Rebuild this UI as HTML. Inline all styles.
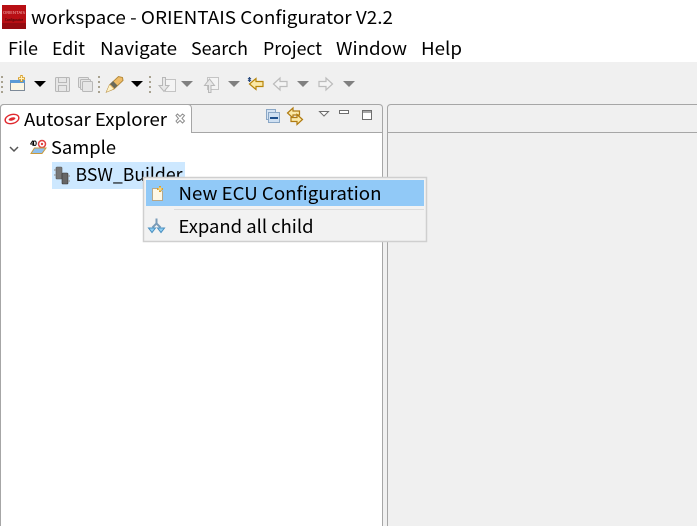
<!DOCTYPE html>
<html><head><meta charset="utf-8"><style>
html,body{margin:0;padding:0;background:#fff;width:697px;height:526px;overflow:hidden}
svg{display:block}
text{font-family:"Noto Sans CJK SC","Liberation Sans",sans-serif;fill:#000;font-size:18px}
</style></head><body>
<svg width="697" height="526" viewBox="0 0 697 526" xmlns="http://www.w3.org/2000/svg">
<rect width="697" height="526" fill="#fff"/>
<!-- app icon -->
<rect x="2" y="5" width="24" height="24" fill="#b80f14"/>
<rect x="2" y="23" width="24" height="6" fill="#950b10"/>
<text x="3" y="14" style="font-size:3.500px;fill:#f2b5b5" textLength="22" lengthAdjust="spacingAndGlyphs">ORIENTAIS</text>
<text x="5" y="21" style="font-size:3.500px;fill:#4a0a0a;font-weight:700" textLength="18" lengthAdjust="spacingAndGlyphs">Configurator</text>
<text x="31" y="24" textLength="362" lengthAdjust="spacingAndGlyphs">workspace - ORIENTAIS Configurator V2.2</text>
<!-- menu -->
<text x="8" y="55" textLength="30" lengthAdjust="spacingAndGlyphs">File</text>
<text x="52" y="55" textLength="33" lengthAdjust="spacingAndGlyphs">Edit</text>
<text x="100" y="55" textLength="77" lengthAdjust="spacingAndGlyphs">Navigate</text>
<text x="191" y="55" textLength="57" lengthAdjust="spacingAndGlyphs">Search</text>
<text x="263" y="55" textLength="59" lengthAdjust="spacingAndGlyphs">Project</text>
<text x="336" y="55" textLength="71" lengthAdjust="spacingAndGlyphs">Window</text>
<text x="421" y="55" textLength="41" lengthAdjust="spacingAndGlyphs">Help</text>
<!-- toolbar bg -->
<rect x="0" y="62" width="697" height="464" fill="#f0f0f0"/>
<!-- toolbar separators -->
<g fill="#a8a290">
<rect x="1" y="76" width="2" height="2"/><rect x="1" y="81" width="2" height="2"/><rect x="1" y="86" width="2" height="2"/><rect x="1" y="91" width="2" height="2"/>
<rect x="98" y="76" width="2" height="2"/><rect x="98" y="81" width="2" height="2"/><rect x="98" y="86" width="2" height="2"/><rect x="98" y="91" width="2" height="2"/>
<rect x="149" y="76" width="2" height="2"/><rect x="149" y="81" width="2" height="2"/><rect x="149" y="86" width="2" height="2"/><rect x="149" y="91" width="2" height="2"/>
</g>
<!-- new icon -->
<rect x="10.500" y="80.500" width="14" height="10" fill="#fbf6e4" stroke="#7d8a98"/>
<rect x="10" y="80" width="15" height="3" fill="#5d9bd5"/>
<path d="M21.500 75v7M18 78.500h7" stroke="#d9a02c" stroke-width="2.500"/>
<path d="M21.500 76v5M19 78.500h5" stroke="#fff3c0" stroke-width="1"/>
<path d="M34 81h12l-6 6z" fill="#000"/>
<!-- save -->
<g fill="#e6e6e6" stroke="#b8b8b8">
<rect x="55.500" y="77.500" width="14" height="14" rx="1"/>
<rect x="58.500" y="77.500" width="8" height="5"/>
<rect x="58.500" y="85.500" width="8" height="6"/>
<rect x="78.500" y="77.500" width="10" height="10" rx="1"/>
<rect x="80.500" y="79.500" width="10" height="10" rx="1"/>
<rect x="82.500" y="81.500" width="10" height="10" rx="1"/>
</g>
<!-- pen -->
<path d="M106.500 92l3-7 9-8.500 4 1 .5 3-9 8.500z" fill="#eebc68" stroke="#b58a3a"/>
<path d="M106.500 92l3-7 4 4z" fill="#fff3c8"/>
<path d="M110 84l4.500 4.500 3-3-4.500-4.500z" fill="#6a6a5a"/>
<path d="M131 81h12l-6 6z" fill="#000"/>
<!-- next annotation disabled -->
<rect x="165.500" y="79.500" width="10" height="12" fill="#f4f4f4" stroke="#c4c4c4"/>
<path d="M162.500 77.500h3v8h3.500l-5 6-5-6h3.500z" fill="#e8e8e8" stroke="#b8b8b8"/>
<path d="M181 81h12l-6 6z" fill="#808080"/>
<rect x="207.500" y="77.500" width="11" height="12" fill="#f4f4f4" stroke="#c4c4c4"/>
<path d="M208.500 92.500v-7h-4l5-6.500 5 6.500h-3.500v7z" fill="#e8e8e8" stroke="#b8b8b8"/>
<path d="M228 81h12l-6 6z" fill="#808080"/>
<!-- last edit -->
<path d="M249.500 84l6.500-5.500v3h7v5h-7v3z" fill="#fbe9a8" stroke="#b8860b" stroke-width="1.200"/>
<path d="M248 78l3 3M251 78l-3 3M249.500 77v5" stroke="#2b4c80" stroke-width="1"/>
<!-- back fwd -->
<path d="M273.500 84l6.500-6v3.500h7v5h-7v3.500z" fill="#f4f4f4" stroke="#bcbcbc" stroke-width="1.200"/>
<path d="M297 81h12l-6 6z" fill="#808080"/>
<path d="M332.500 84l-6.500-6v3.500h-7v5h7v3.500z" fill="#f4f4f4" stroke="#bcbcbc" stroke-width="1.200"/>
<path d="M343 81h12l-6 6z" fill="#808080"/>
<!-- left panel -->
<rect x="1" y="133" width="381" height="393" fill="#fff"/>
<path d="M382.500 526V108q0-3.500-3.500-3.500H4q-3.500 0-3.500 3.500V526" fill="none" stroke="#a6a6a6"/>
<rect x="191" y="132" width="192" height="1" fill="#a6a6a6"/>
<path d="M.5 133V108q0-3.500 3.500-3.500H188q3 0 3.500 3.500V133" fill="#fff" stroke="#a6a6a6"/>
<rect x="1" y="130" width="190" height="4" fill="#fff"/>
<ellipse cx="12" cy="119" rx="7" ry="4.500" fill="#fff" stroke="#e0282e" stroke-width="1.400" transform="rotate(-15 12 119)"/>
<ellipse cx="12" cy="119" rx="3.500" ry="1.500" fill="#e0282e" transform="rotate(-15 12 119)"/>
<text x="24" y="126" textLength="143" lengthAdjust="spacingAndGlyphs">Autosar Explorer</text>
<path d="M176 115.500l1.500-1.500 2.500 2.500 2.500-2.500 2 1.500-2.500 3 2.500 2.500-2 2-2.500-2.500-2.500 2.500-1.500-2 2.500-2.500z" fill="#fff" stroke="#8f8f8f" stroke-width="1"/>
<!-- view toolbar -->
<rect x="266.500" y="109.500" width="9" height="10" fill="#d5e3f3" stroke="#8aa7c6"/>
<rect x="268.500" y="112.500" width="11" height="10" fill="#cfe0f2" stroke="#8aa7c6"/>
<rect x="270" y="117" width="8" height="2" fill="#1d4f8c"/>
<path d="M287.500 113l5.500-5v3h6.500v4H293v3z" fill="#fbe9a8" stroke="#b07b12" stroke-width="1.200"/>
<path d="M302.500 119.500l-5.500-5v3h-6v4h6v3z" fill="#fbe9a8" stroke="#b07b12" stroke-width="1.200"/>
<path d="M319.500 111.500h9l-4.500 4.500z" fill="#fff" stroke="#6e6e6e"/>
<rect x="339.500" y="110.500" width="9" height="3" fill="#fff" stroke="#6e6e6e"/>
<rect x="362.500" y="110.500" width="9" height="9" fill="#fff" stroke="#6e6e6e"/>
<rect x="362" y="110" width="10" height="3" fill="#6e6e6e" opacity=".6"/>
<!-- right panel -->
<path d="M387.500 526V108q0-3.500 3.500-3.500H697" fill="none" stroke="#a6a6a6"/>
<rect x="388" y="132" width="309" height="1" fill="#a6a6a6"/>
<!-- tree -->
<path d="M10 147l4 4 4-4" fill="none" stroke="#555" stroke-width="1.500"/>
<text x="30" y="146" style="font-size:7.500px;font-weight:700" textLength="7">40</text>
<circle cx="42" cy="144" r="3.500" fill="#fff" stroke="#e04040" stroke-width="1.500"/>
<circle cx="42" cy="144" r="1.200" fill="#e04040"/>
<path d="M31 153.500l3.500-5.500h11.500l-4 5.500z" fill="#8fc0ee" stroke="#c99a3d"/>
<text x="51" y="154" textLength="65" lengthAdjust="spacingAndGlyphs">Sample</text>
<rect x="52" y="162" width="133" height="27" fill="#cde8ff"/>
<rect x="56" y="167" width="6" height="12" rx="1" fill="#777" stroke="#555" stroke-width=".6"/>
<rect x="62" y="173" width="6" height="11" rx="1" fill="#666" stroke="#333" stroke-width=".6"/>
<path d="M54 170h2M54 175h2M68 176h2M68 181h2" stroke="#999" stroke-width="1.200"/>
<text x="75.500" y="181" textLength="107" lengthAdjust="spacingAndGlyphs">BSW_Builder</text>
<!-- context menu -->
<rect x="143.500" y="177.500" width="283" height="64" fill="#f2f2f2" stroke="#cfcfcf" stroke-width="1.500"/>
<rect x="146" y="180" width="278" height="26" fill="#91c9f7"/>
<rect x="174" y="209" width="250" height="1" fill="#dcdcdc"/>
<path d="M152.500 188.500h7l3 3v9h-10z" fill="#fff8e6" stroke="#b8a888"/>
<path d="M160 186v6M157 189h6" stroke="#d9a02c" stroke-width="2"/>
<path d="M160 187v4M158 189h4" stroke="#fff3c0" stroke-width=".8"/>
<text x="178.500" y="200" textLength="203" lengthAdjust="spacingAndGlyphs">New ECU Configuration</text>
<path d="M156.500 218.500v5l-4 4M156.500 223.500l4 4" fill="none" stroke="#7a9cb8" stroke-width="2"/>
<path d="M148.500 228h7l-3.500 4.500zM157.500 228h7l-3.500 4.500z" fill="#8fd0f5" stroke="#4a8fc0" stroke-width="1"/>
<text x="178.500" y="233" textLength="135" lengthAdjust="spacingAndGlyphs">Expand all child</text>
</svg>
</body></html>
